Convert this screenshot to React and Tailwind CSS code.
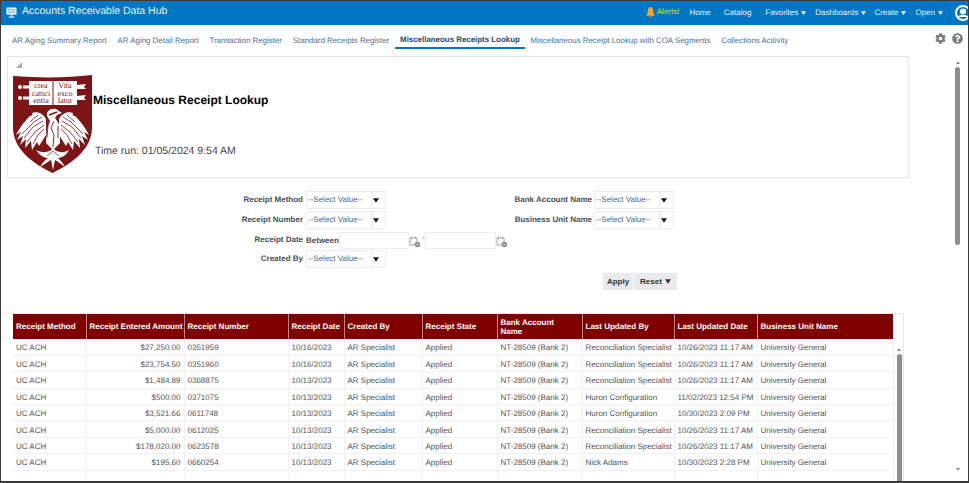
import React from 'react'
import { FaCog, FaQuestionCircle } from 'react-icons/fa'

const tabs = [
    'AR Aging Summary Report',
    'AR Aging Detail Report',
    'Transaction Register',
    'Standard Receipts Register',
    'Miscellaneous Receipts Lookup',
    'Miscellaneous Receipt Lookup with COA Segments',
    'Collections Acitivity',
]

const columns = [
    { name: 'Receipt Method', width: 'w-[73px]' },
    { name: 'Receipt Entered Amount', width: 'w-[98px]' },
    { name: 'Receipt Number', width: 'w-[104px]' },
    { name: 'Receipt Date', width: 'w-[56px]' },
    { name: 'Created By', width: 'w-[78px]' },
    { name: 'Receipt State', width: 'w-[75px]' },
    { name: <>Bank Account<br />Name</>, width: 'w-[85px]' },
    { name: 'Last Updated By', width: 'w-[92px]' },
    { name: 'Last Updated Date', width: 'w-[83px]' },
    { name: 'Business Unit Name', width: 'w-[136px]' },
]

const RS = 'Reconciliation Specialist'
const HC = 'Huron Configuration'
const rows = [
    ['$27,250.00', '0351959', '10/16/2023', RS, '10/26/2023 11:17 AM'],
    ['$23,754.50', '0351960', '10/16/2023', RS, '10/26/2023 11:17 AM'],
    ['$1,484.89', '0368875', '10/13/2023', RS, '10/26/2023 11:17 AM'],
    ['$500.00', '0371075', '10/13/2023', HC, '11/02/2023 12:54 PM'],
    ['$3,521.66', '0611748', '10/13/2023', HC, '10/30/2023 2:09 PM'],
    ['$5,000.00', '0612025', '10/13/2023', RS, '10/26/2023 11:17 AM'],
    ['$178,020.00', '0623578', '10/13/2023', RS, '10/26/2023 11:17 AM'],
    ['$195.60', '0660254', '10/13/2023', 'Nick Adams', '10/30/2023 2:28 PM'],
    ['', '', '', '', ''],
]

const Caret = ({ className }) => (
    <svg viewBox="0 0 8 6" className={className}><polygon points="0,0 8,0 4,6" fill="currentColor" /></svg>
)

const WING = 'M33 44 C30 38 24 36 19 38 C20 40 19 41 17 41 C13 45 8 50 3 60 L8 57 L4 65 L10 61 L7 70 L13 64 L12 73 L18 66 L19 75 L24 67 L26 71 L33 60 Z'
const FEATHERS = 'M29 42 L21 47 L9 59 M30 46 L20 52 L11 63 M31 50 L22 57 L14 67 M31 54 L25 60 L20 69 M25 40 L17 47'

const Logo = () => (
    <svg viewBox="0 0 80 98" className="w-[80px] h-[98px] shrink-0">
        <path d="M0 1 C25 3 55 3 79 0 L79 52 C79 74 60 88 39.5 98 C19 88 0 74 0 52 Z" fill="#7d1517" />
        <circle cx="7" cy="12" r="2" fill="#fff" />
        <circle cx="7" cy="23" r="2" fill="#fff" />
        <rect x="10" y="10.5" width="6" height="3" fill="#fff" />
        <rect x="10" y="21.5" width="6" height="3" fill="#fff" />
        <path d="M64 10 L73 9 L71 12 L73 14 L64 14 Z M64 21 L73 20 L71 23 L73 25 L64 25 Z" fill="#fff" />
        <rect x="16" y="6" width="23.5" height="24" fill="#fff" />
        <rect x="40.5" y="6" width="23.5" height="24" fill="#fff" />
        <g fill="#7d1517" fontFamily="'Liberation Serif', serif" fontSize="8" textAnchor="middle">
            <text x="28" y="13">crea</text>
            <text x="28" y="20.5">catsci</text>
            <text x="28" y="28">entia</text>
            <text x="52" y="13">Vita</text>
            <text x="52" y="20.5">exco</text>
            <text x="52" y="28">latur</text>
        </g>
        <path d={WING} fill="#fff" />
        <path d={FEATHERS} stroke="#7d1517" strokeWidth="0.8" fill="none" />
        <g transform="translate(79 0) scale(-1 1)">
            <path d={WING} fill="#fff" />
            <path d={FEATHERS} stroke="#7d1517" strokeWidth="0.8" fill="none" />
        </g>
        <path d="M34 41 C33 37 37 33 43 34 L49 38 L44 40 L42 43 C45 47 48 51 47 58 L47 68 L40 75 L33 68 L34 54 L37 46 Z" fill="#fff" />
        <path d="M41 46 L38 53 L41 60 L40 72 M35 50 L34 62 M45 51 L45 63" stroke="#7d1517" strokeWidth="0.9" fill="none" />
        <path d="M36 40 L44 37" stroke="#7d1517" strokeWidth="1.4" />
        <path d="M40 73 C37 77 31 79 23 75 C27 81 32 83 35 83 C32 85 29 88 27 92 C32 89 36 86 38 85 L40 95 L42 85 C44 86 48 89 52 92 C50 88 47 85 45 83 C48 83 53 81 56 75 C49 79 43 77 40 73 Z" fill="#fff" />
        <path d="M40 76 L34 81 M40 76 L46 81" stroke="#7d1517" strokeWidth="0.7" />
    </svg>
)

const Select = () => (
    <div className="flex w-[80px] h-[18px] border border-[#eceef1] shrink-0">
        <div className="w-[65px] border-r border-[#eceef1] pl-px text-[8px] leading-[16px] text-[#5c6670] whitespace-nowrap shadow-[0_0_2px_#e3e6ea]">--Select Value--</div>
        <div className="flex-1 flex items-center pl-px text-[#111]"><Caret className="w-[6px] h-[5px]" /></div>
    </div>
)

const Calendar = () => (
    <svg viewBox="0 0 12 12" className="w-[12px] h-[12px] shrink-0 mt-[3px]">
        <path d="M1 2 H8 V7 H6 V9 H1 Z" fill="none" stroke="#a0a4a8" strokeWidth="1" />
        <path d="M2.5 0.5 V3 M6.5 0.5 V3" stroke="#a0a4a8" strokeWidth="1" />
        <circle cx="8.5" cy="8.5" r="2.7" fill="#8e9398" />
        <path d="M7.2 8.5 H9.8" stroke="#dfe1e3" strokeWidth="0.7" />
    </svg>
)

const Field = ({ label, children, height, labelWidth, gap = 'pr-[3px]' }) => (
    <div className={`flex items-center ${height}`}>
        <label className={`${labelWidth} ${gap} shrink-0 text-right text-[8px] font-bold text-[#46505a]`}>{label}</label>
        {children}
    </div>
)

const NavItem = ({ label, caret, className }) => (
    <div className={`flex items-center gap-[3px] text-[8px] text-[#eaf4fb] ${className}`}>
        {label}
        {caret && <Caret className="w-[5px] h-[4px]" />}
    </div>
)

const ScrollBar = ({ className, thumb }) => (
    <div className={`flex flex-col items-center ${className}`}>
        <Caret className="w-[6px] h-[3px] rotate-180 text-[#8d8d8d] shrink-0" />
        <div className={`w-[5px] rounded-[3px] bg-[#8e8e8e] shrink-0 ${thumb}`}></div>
    </div>
)

const App = () => {
    return (
        <div className="w-[969px] h-[483px] overflow-hidden bg-white border-t border-l border-r border-b-2 border-[#3a3a3a] flex flex-col font-['Liberation_Sans',Arial,sans-serif] [text-rendering:geometricPrecision]">
            {/* top bar */}
            <div className="h-[24px] shrink-0 bg-[#0076c4] flex items-center pl-[2px] pb-px">
                <svg viewBox="0 0 12 12" className="w-[11px] h-[11px] ml-[3px] mr-[5px]">
                    <rect x="0.5" y="0.5" width="11" height="8" rx="1" fill="#e8f2fa" />
                    <path d="M2.5 3 H4 M5.2 3 H6.8 M8 3 H9.5 M2.5 5.5 H4 M5.2 5.5 H6.8 M8 5.5 H9.5" stroke="#0076c4" strokeWidth="1" />
                    <path d="M6 8.5 V10.5 M3 11 H9" stroke="#e8f2fa" strokeWidth="1.2" />
                </svg>
                <div className="text-[10.5px] text-[#eaf4fb] mb-px">Accounts Receivable Data Hub</div>
                <div className="ml-auto flex items-center text-[#d9e021] text-[8px] mr-[10px] mb-px">
                    <svg viewBox="0 0 10 12" className="w-[9px] h-[11px] mr-[2px]">
                        <path d="M5 0 C7 0 8 2 8 4 C8 7 9 8 10 9.5 H0 C1 8 2 7 2 4 C2 2 3 0 5 0 Z" fill="#f5a623" />
                        <rect x="3.5" y="10" width="3" height="1.6" fill="#c9781a" />
                    </svg>
                    Alerts!
                </div>
                <NavItem label="Home" className="mr-[13px]" />
                <NavItem label="Catalog" className="mr-[14px]" />
                <NavItem label="Favorites" caret className="mr-[9px]" />
                <NavItem label="Dashboards" caret className="mr-[8px]" />
                <NavItem label="Create" caret className="mr-[9px]" />
                <NavItem label="Open" caret className="mr-[12px]" />
                <svg viewBox="0 0 16 16" className="w-[16px] h-[16px] -mr-[3px] shrink-0">
                    <circle cx="8" cy="8" r="7" fill="none" stroke="#fff" strokeWidth="2" />
                    <circle cx="8" cy="6.5" r="3" fill="#fff" />
                    <path d="M3 11 C5 9.5 11 9.5 13 11 L13 12 H3 Z" fill="#fff" />
                </svg>
            </div>

            <div className="flex flex-1 min-h-0">
                <div className="w-[929px] shrink-0 flex flex-col pl-[6px]">
                    {/* tabs */}
                    <div className="h-[24px] flex items-end gap-[10.8px] pl-[5px] shrink-0">
                        {tabs.map((tab) => (
                            tab === 'Miscellaneous Receipts Lookup' ? (
                                <div key={tab} className="h-[24px] px-[5px] -mx-[5px] pt-[8px] flex items-center border-b-2 border-[#0076c4] text-[7.9px] font-bold text-[#2a4a6b] whitespace-nowrap">{tab}</div>
                            ) : (
                                <div key={tab} className="h-[24px] pt-[7px] flex items-center text-[7.9px] text-[#4f7299] whitespace-nowrap">{tab}</div>
                            )
                        ))}
                    </div>

                    {/* report title */}
                    <div className="mt-[7px] w-[902px] h-[122px] shrink-0 border border-[#e2e5ea] pl-[5px] pt-[3px]">
                        <div className="h-[15px] pl-[3px] pt-[2px]">
                            <div className="w-0 h-0 border-l-[6px] border-l-transparent border-b-[6px] border-b-[#a8adb3]"></div>
                        </div>
                        <div className="flex">
                            <Logo />
                            <div className="flex flex-col">
                                <div className="mt-[16px] text-[12px] font-bold text-black">Miscellaneous Receipt Lookup</div>
                                <div className="mt-[35px] ml-[2px] text-[10.5px] text-[#444]">Time run: 01/05/2024 9:54 AM</div>
                            </div>
                        </div>
                    </div>

                    {/* filters */}
                    <div className="mt-[12px] flex shrink-0">
                        <div className="w-[503px] flex flex-col">
                            <Field label="Receipt Method" height="h-[20px]" labelWidth="w-[299px]"><Select /></Field>
                            <Field label="Receipt Number" height="h-[20px]" labelWidth="w-[299px]"><Select /></Field>
                            <Field label="Receipt Date" height="h-[20px]" labelWidth="w-[299px]">
                                <div className="flex items-center">
                                    <span className="w-[33px] text-[8px] font-bold text-[#46505a] pt-[2px]">Between</span>
                                    <div className="w-[70px] h-[17px] border border-[#eceef1]"></div>
                                    <Calendar />
                                    <span className="w-[3px] ml-px text-[8px] text-[#555] -mt-[4px]">-</span>
                                    <div className="w-[71px] h-[17px] border border-[#eceef1]"></div>
                                    <Calendar />
                                </div>
                            </Field>
                            <Field label="Created By" height="h-[18px]" labelWidth="w-[299px]"><Select /></Field>
                        </div>
                        <div className="flex flex-col">
                            <Field label="Bank Account Name" height="h-[20px]" labelWidth="w-[84px]" gap="pr-[2px]"><Select /></Field>
                            <Field label="Business Unit Name" height="h-[20px]" labelWidth="w-[84px]" gap="pr-[2px]"><Select /></Field>
                        </div>
                    </div>

                    {/* apply and reset */}
                    <div className="mt-[5px] ml-[596px] flex gap-px shrink-0">
                        <button className="w-[30px] h-[17px] bg-[#e8eaed] text-[8px] font-bold text-[#333]">Apply</button>
                        <button className="w-[43px] h-[17px] bg-[#e8eaed] text-[8px] font-bold text-[#333] flex items-center justify-center gap-[3px]">
                            Reset <Caret className="w-[6px] h-[5px]" />
                        </button>
                    </div>

                    {/* table */}
                    <div className="mt-[23px] ml-[6px] w-[891px] flex-1 min-h-0 overflow-hidden border-t border-r border-[#e4e7eb] flex">
                        <table className="table-fixed border-collapse w-[880px] h-fit shrink-0">
                            <thead>
                                <tr className="h-[25px] bg-[#800000]">
                                    {columns.map((col, i) => (
                                        <th key={i} className={`${col.width} border-r border-[#b98585] last:border-r-0 px-[3px] text-left text-[8px] leading-[9px] font-bold text-white whitespace-nowrap`}>{col.name}</th>
                                    ))}
                                </tr>
                            </thead>
                            <tbody>
                                {rows.map((row, i) => (
                                    <tr key={i} className="h-[16.4px] text-[8px] text-[#555] [&>td]:border-b [&>td]:border-r [&>td]:border-[#f0f1f3] [&>td]:px-[3px] [&>td]:pt-[3px] [&>td]:whitespace-nowrap [&>td]:overflow-hidden">
                                        <td>{row[0] && 'UC ACH'}</td>
                                        <td className="text-right">{row[0]}</td>
                                        <td>{row[1]}</td>
                                        <td>{row[2]}</td>
                                        <td>{row[0] && 'AR Specialist'}</td>
                                        <td>{row[0] && 'Applied'}</td>
                                        <td>{row[0] && 'NT-28509 (Bank 2)'}</td>
                                        <td>{row[3]}</td>
                                        <td>{row[4]}</td>
                                        <td className="border-r-0">{row[0] && 'University General'}</td>
                                    </tr>
                                ))}
                            </tbody>
                        </table>
                        <ScrollBar className="flex-1 pl-[2px] pt-[34px] gap-[3px]" thumb="h-[140px]" />
                    </div>
                </div>

                {/* right side, settings and page scrollbar */}
                <div className="flex-1 flex flex-col">
                    <div className="h-[24px] flex items-center justify-end gap-[6px] pr-[5px] pt-[3px] shrink-0">
                        <FaCog className="w-[11px] h-[11px] text-[#7d7d7d]" />
                        <FaQuestionCircle className="w-[11px] h-[11px] text-[#7d7d7d]" />
                    </div>
                    <ScrollBar className="w-[38px] pl-[17px] pt-[12px] gap-[3px] flex-1" thumb="h-[178px]" />
                    <Caret className="w-[6px] h-[3px] ml-[25px] mb-[10px] text-[#8d8d8d] shrink-0" />
                </div>
            </div>
        </div>
    )
}

export default App
